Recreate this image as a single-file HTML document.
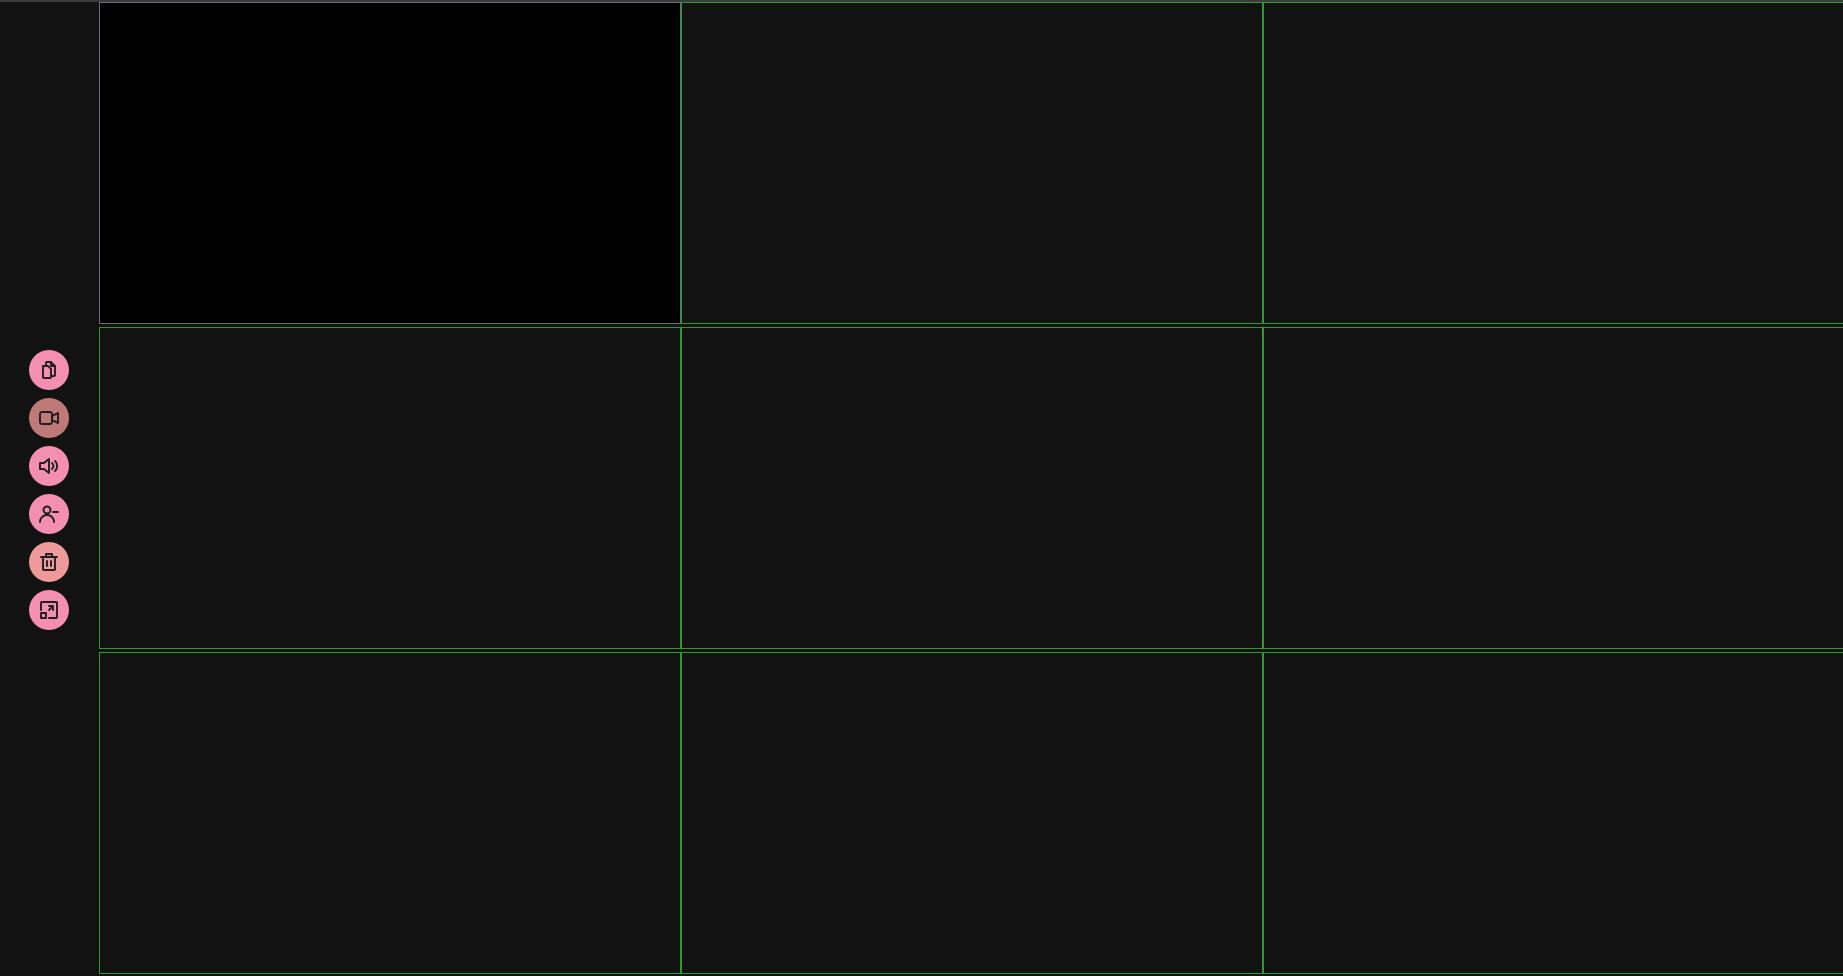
<!DOCTYPE html>
<html><head><meta charset="utf-8"><style>
html,body{margin:0;padding:0;width:1843px;height:976px;background:#121212;overflow:hidden;position:relative}
.top{position:absolute;left:0;top:0;width:1843px;height:2px;background:#3c3c3f}
.c{position:absolute;box-sizing:border-box;border:1px solid #2f9a2f;background:#121212}
.c0{border-color:#6a6a78;background:#000}
.b{position:absolute;left:29px;width:40px;height:40px;border-radius:50%;background:#f48fb1;display:flex;align-items:center;justify-content:center}
.b svg{width:24px;height:24px;fill:none;stroke:#1e1e24;stroke-width:1.9;stroke-linecap:round;stroke-linejoin:round}
</style></head><body>
<div class="top"></div>
<div class="c c0" style="left:99px;top:2px;width:582px;height:322px"></div>
<div class="c" style="left:681px;top:2px;width:582px;height:322px"></div>
<div class="c" style="left:1263px;top:2px;width:590px;height:322px"></div>
<div class="c" style="left:99px;top:327px;width:582px;height:322px"></div>
<div class="c" style="left:681px;top:327px;width:582px;height:322px"></div>
<div class="c" style="left:1263px;top:327px;width:590px;height:322px"></div>
<div class="c" style="left:99px;top:652px;width:582px;height:322px"></div>
<div class="c" style="left:681px;top:652px;width:582px;height:322px"></div>
<div class="c" style="left:1263px;top:652px;width:590px;height:322px"></div>

<div class="b" style="top:350px"><svg viewBox="0 0 24 24"><path d="M9 7V5a1 1 0 0 1 1-1h4l4 4v9a1 1 0 0 1-1 1h-2"/><path d="M14 4v4h4"/><path d="M6 8h5l3 3v8a1 1 0 0 1-1 1H7a1 1 0 0 1-1-1z"/></svg></div>
<div class="b" style="top:398px;background:#bf7a78"><svg viewBox="0 0 24 24"><rect x="3" y="6" width="12" height="12" rx="2"/><path d="M15 10l6-3v10l-6-3z"/></svg></div>
<div class="b" style="top:446px"><svg viewBox="0 0 24 24"><path d="M3 9h4l5-4v14l-5-4H3z"/><path d="M15 9a4 4 0 0 1 0 6M18 7a7 7 0 0 1 0 10"/></svg></div>
<div class="b" style="top:494px"><svg viewBox="0 0 24 24"><circle cx="10" cy="8" r="3.5"/><path d="M3 20a7 7 0 0 1 14 0"/><path d="M16 10h5"/></svg></div>
<div class="b" style="top:542px;background:#ef9a9a"><svg viewBox="0 0 24 24"><path d="M4 7h16"/><path d="M9 7V4h6v3"/><path d="M6 7v12a1 1 0 0 0 1 1h10a1 1 0 0 0 1-1V7"/><path d="M10 11v5M14 11v5"/></svg></div>
<div class="b" style="top:590px"><svg viewBox="0 0 24 24"><path d="M4 12V5a1 1 0 0 1 1-1h14a1 1 0 0 1 1 1v14a1 1 0 0 1-1 1h-7"/><rect x="4" y="15" width="5" height="5"/><path d="M12 12l4-4M12 8h4v4"/></svg></div>
</body></html>
